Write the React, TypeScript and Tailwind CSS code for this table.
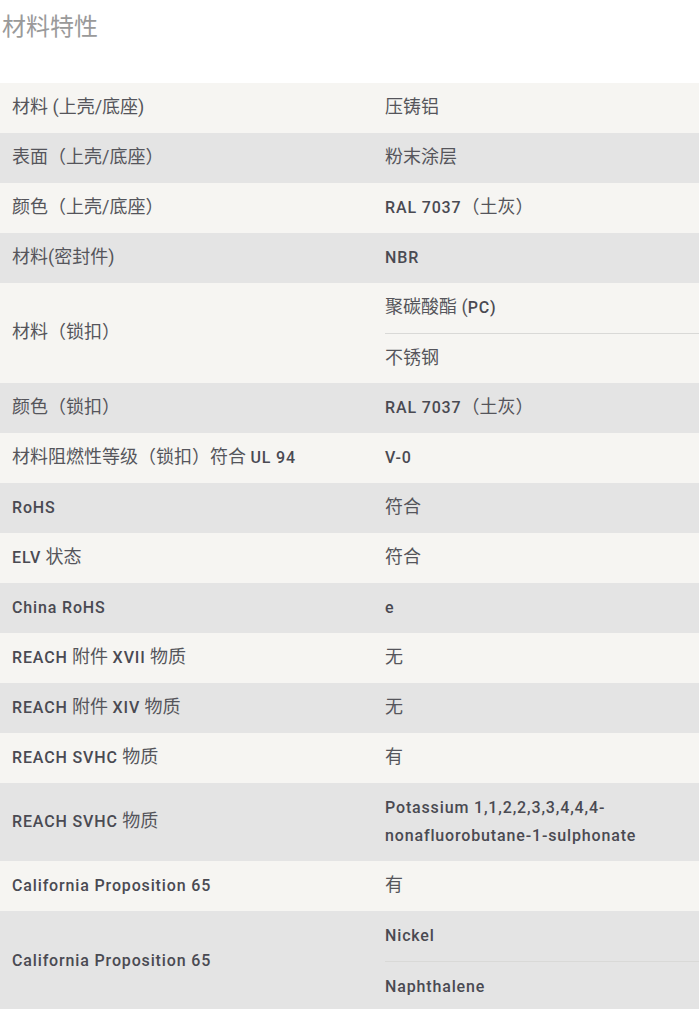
import React from 'react';

type Row = {
  label: string;
  values: string[];
};

const rows: Row[] = [
  { label: '材料 (上壳/底座)', values: ['压铸铝'] },
  { label: '表面（上壳/底座）', values: ['粉末涂层'] },
  { label: '颜色（上壳/底座）', values: ['RAL 7037（土灰）'] },
  { label: '材料(密封件)', values: ['NBR'] },
  { label: '材料（锁扣）', values: ['聚碳酸酯 (PC)', '不锈钢'] },
  { label: '颜色（锁扣）', values: ['RAL 7037（土灰）'] },
  { label: '材料阻燃性等级（锁扣）符合 UL 94', values: ['V-0'] },
  { label: 'RoHS', values: ['符合'] },
  { label: 'ELV 状态', values: ['符合'] },
  { label: 'China RoHS', values: ['e'] },
  { label: 'REACH 附件 XVII 物质', values: ['无'] },
  { label: 'REACH 附件 XIV 物质', values: ['无'] },
  { label: 'REACH SVHC 物质', values: ['有'] },
  { label: 'REACH SVHC 物质', values: ['Potassium 1,1,2,2,3,3,4,4,4-nonafluorobutane-1-sulphonate'] },
  { label: 'California Proposition 65', values: ['有'] },
  { label: 'California Proposition 65', values: ['Nickel', 'Naphthalene'] },
];

// latin runs are set medium with wide tracking, CJK runs stay thin and a bit larger
function MixedText({ text }: { text: string }) {
  const parts = text.split(/([A-Za-z0-9][A-Za-z0-9 ,.\-()/]*[A-Za-z0-9)]|[A-Za-z0-9])/g).filter((p) => p !== '');
  return (
    <>
      {parts.map((p, i) =>
        /[A-Za-z0-9]/.test(p) ? (
          <span key={i} className="font-medium tracking-[0.85px] leading-none">
            {p}
          </span>
        ) : (
          <span key={i} className="font-normal text-[18px] leading-none text-[#55555b]">
            {p}
          </span>
        )
      )}
    </>
  );
}

export default function App() {
  return (
    <div
      className="w-[699px] bg-white text-[16px] text-[#4a4a52]"
      style={{ fontFamily: 'Roboto, "Noto Sans CJK SC", sans-serif' }}
    >
      <div className="h-[83px] pl-[2px] pt-[11px]">
        <h2 className="text-[24px] leading-[32px] font-normal text-[#9a9a9a]">材料特性</h2>
      </div>

      <div>
        {rows.map((row, idx) => (
          <div
            key={idx}
            className={`grid grid-cols-[373px_1fr] ${idx % 2 === 0 ? 'bg-[#f6f5f2]' : 'bg-[#e4e4e4]'}`}
          >
            <div className="flex items-center pl-3 py-[11px] leading-[28px]">
              <span>
                <MixedText text={row.label} />
              </span>
            </div>
            {row.values.length === 1 ? (
              <div className="flex items-center pl-3 pr-3 py-[11px] leading-[28px]">
                <span>
                  <MixedText text={row.values[0]} />
                </span>
              </div>
            ) : (
              <div className="pl-3">
                {row.values.map((v, j) => (
                  <div
                    key={j}
                    className={`flex items-center h-[50px] leading-[28px] ${j > 0 ? 'border-t border-[#d9d9d7]' : ''}`}
                  >
                    <span>
                      <MixedText text={v} />
                    </span>
                  </div>
                ))}
              </div>
            )}
          </div>
        ))}
      </div>
    </div>
  );
}
